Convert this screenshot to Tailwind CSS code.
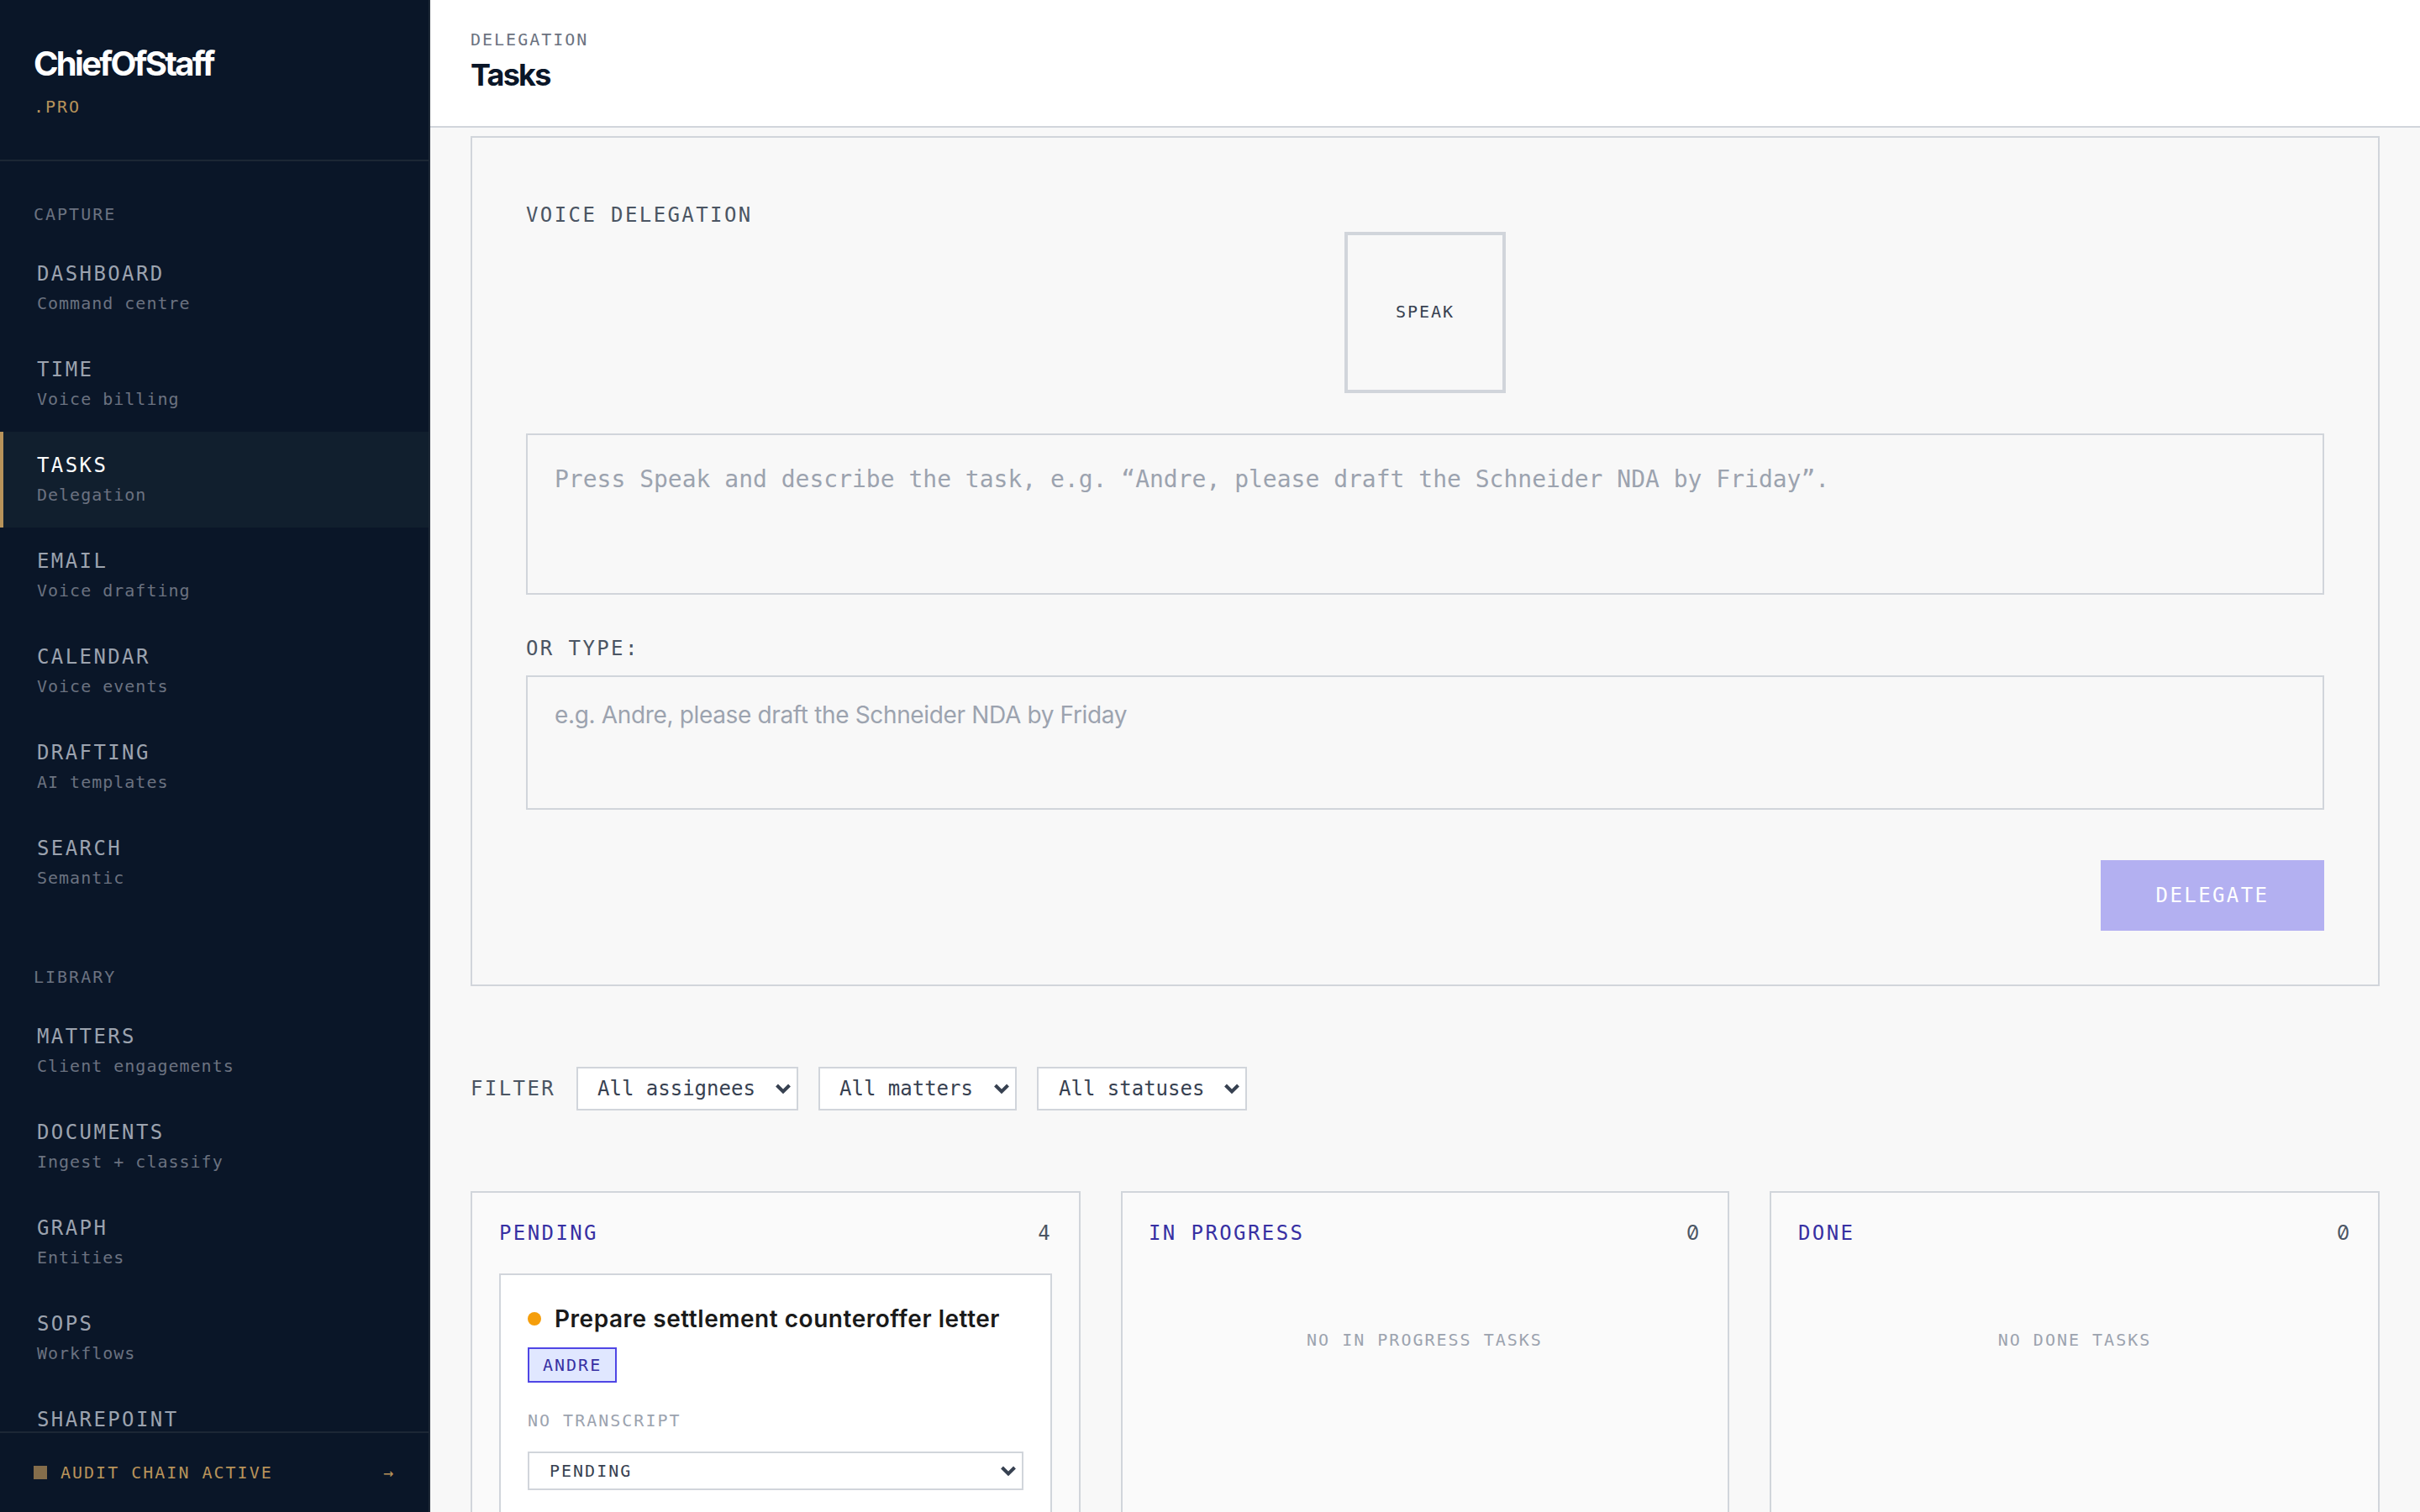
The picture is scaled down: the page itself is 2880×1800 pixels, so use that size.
<!DOCTYPE html>
<html lang="en">

<head>
    <meta charset="UTF-8">
    <title>Tasks | ChiefOfStaff.pro</title>
    <script src="https://cdn.jsdelivr.net/npm/@tailwindcss/browser@4"></script>
</head>

<body class="flex h-screen overflow-hidden bg-[#f8f8f8] font-['DejaVu_Sans_Mono',monospace]">
    <!-- Sidebar -->
    <aside class="flex h-full w-[512px] shrink-0 flex-col border-r-2 border-[#1f2937] bg-[#0a1628]">
        <div class="h-48 shrink-0 border-b-2 border-[#1c2735] px-10 pt-12">
            <div class="font-['Inter',sans-serif] text-[40px] leading-[56px] font-bold tracking-[-0.068em] text-white">ChiefOfStaff</div>
            <div class="mt-2 text-[20px] leading-[30px] tracking-[0.1em] text-[#b8935a]">.PRO</div>
        </div>
        <nav class="min-h-0 flex-1 overflow-hidden pt-12">
            <div class="mb-16">
                <div class="mb-4 px-10 text-[20px] leading-[30px] tracking-[0.1em] text-[#6b7280]">CAPTURE</div>
                <a class="block h-[114px] border-l-4 border-transparent pt-[22px] pl-10">
                    <div class="text-2xl leading-9 tracking-[0.1em] text-[#9ca3af]">DASHBOARD</div>
                    <div class="mt-0.5 text-[20px] leading-[30px] tracking-[0.05em] text-[#6b7280]">Command centre</div>
                </a>
                <a class="block h-[114px] border-l-4 border-transparent pt-[22px] pl-10">
                    <div class="text-2xl leading-9 tracking-[0.1em] text-[#9ca3af]">TIME</div>
                    <div class="mt-0.5 text-[20px] leading-[30px] tracking-[0.05em] text-[#6b7280]">Voice billing</div>
                </a>
                <a class="block h-[114px] border-l-4 border-[#b8935a] bg-[#111f2e] pt-[22px] pl-10">
                    <div class="text-2xl leading-9 tracking-[0.1em] text-white">TASKS</div>
                    <div class="mt-0.5 text-[20px] leading-[30px] tracking-[0.05em] text-[#6b7280]">Delegation</div>
                </a>
                <a class="block h-[114px] border-l-4 border-transparent pt-[22px] pl-10">
                    <div class="text-2xl leading-9 tracking-[0.1em] text-[#9ca3af]">EMAIL</div>
                    <div class="mt-0.5 text-[20px] leading-[30px] tracking-[0.05em] text-[#6b7280]">Voice drafting</div>
                </a>
                <a class="block h-[114px] border-l-4 border-transparent pt-[22px] pl-10">
                    <div class="text-2xl leading-9 tracking-[0.1em] text-[#9ca3af]">CALENDAR</div>
                    <div class="mt-0.5 text-[20px] leading-[30px] tracking-[0.05em] text-[#6b7280]">Voice events</div>
                </a>
                <a class="block h-[114px] border-l-4 border-transparent pt-[22px] pl-10">
                    <div class="text-2xl leading-9 tracking-[0.1em] text-[#9ca3af]">DRAFTING</div>
                    <div class="mt-0.5 text-[20px] leading-[30px] tracking-[0.05em] text-[#6b7280]">AI templates</div>
                </a>
                <a class="block h-[114px] border-l-4 border-transparent pt-[22px] pl-10">
                    <div class="text-2xl leading-9 tracking-[0.1em] text-[#9ca3af]">SEARCH</div>
                    <div class="mt-0.5 text-[20px] leading-[30px] tracking-[0.05em] text-[#6b7280]">Semantic</div>
                </a>
            </div>
            <div>
                <div class="mb-4 px-10 text-[20px] leading-[30px] tracking-[0.1em] text-[#6b7280]">LIBRARY</div>
                <a class="block h-[114px] border-l-4 border-transparent pt-[22px] pl-10">
                    <div class="text-2xl leading-9 tracking-[0.1em] text-[#9ca3af]">MATTERS</div>
                    <div class="mt-0.5 text-[20px] leading-[30px] tracking-[0.05em] text-[#6b7280]">Client engagements</div>
                </a>
                <a class="block h-[114px] border-l-4 border-transparent pt-[22px] pl-10">
                    <div class="text-2xl leading-9 tracking-[0.1em] text-[#9ca3af]">DOCUMENTS</div>
                    <div class="mt-0.5 text-[20px] leading-[30px] tracking-[0.05em] text-[#6b7280]">Ingest + classify</div>
                </a>
                <a class="block h-[114px] border-l-4 border-transparent pt-[22px] pl-10">
                    <div class="text-2xl leading-9 tracking-[0.1em] text-[#9ca3af]">GRAPH</div>
                    <div class="mt-0.5 text-[20px] leading-[30px] tracking-[0.05em] text-[#6b7280]">Entities</div>
                </a>
                <a class="block h-[114px] border-l-4 border-transparent pt-[22px] pl-10">
                    <div class="text-2xl leading-9 tracking-[0.1em] text-[#9ca3af]">SOPS</div>
                    <div class="mt-0.5 text-[20px] leading-[30px] tracking-[0.05em] text-[#6b7280]">Workflows</div>
                </a>
                <a class="block border-l-4 border-transparent pt-[22px] pl-10">
                    <div class="text-2xl leading-9 tracking-[0.1em] text-[#9ca3af]">SHAREPOINT</div>
                </a>
            </div>
        </nav>
        <div class="flex h-24 shrink-0 items-center border-t-2 border-[#1c2735] px-10 text-[20px] leading-[30px] tracking-[0.1em] text-[#b8935a]">
            <span class="mr-4 size-4 bg-[#b8935a] opacity-70"></span>
            <span>AUDIT CHAIN ACTIVE</span>
            <span class="ml-auto">→</span>
        </div>
    </aside>

    <div class="flex min-w-0 flex-1 flex-col">
        <header class="h-[152px] shrink-0 border-b-2 border-[#d1d5db] bg-white px-12 pt-8">
            <div class="text-[20px] leading-[30px] tracking-[0.1em] text-[#6b7280]">DELEGATION</div>
            <h1 class="font-['Inter',sans-serif] text-4xl leading-[54px] font-bold tracking-[-0.05em] text-[#0a1628]">Tasks</h1>
        </header>

        <main class="min-h-0 flex-1 overflow-hidden px-12 pt-2.5">
            <!-- Voice delegation -->
            <section class="h-[1012px] border-2 border-[#d1d5db] px-16 pt-[74px]">
                <div class="text-2xl leading-9 tracking-[0.1em] text-[#4b5563]">VOICE DELEGATION</div>
                <button class="mx-auto mt-0.5 flex size-48 items-center justify-center border-4 border-[#d1d5db] pb-0.5 text-[20px] tracking-[0.1em] text-[#374151]">SPEAK</button>
                <div class="mt-12 h-48 border-2 border-[#d1d5db] px-8 pt-8 text-[28px] leading-[42px] text-[#9ca3af]">Press Speak and describe the task, e.g. “Andre, please draft the Schneider NDA by Friday”.</div>
                <div class="mt-[46px] text-2xl leading-9 tracking-[0.1em] text-[#4b5563]">OR TYPE:</div>
                <div class="mt-[14px] h-40 border-2 border-[#d1d5db] px-8 pt-6 font-['Inter',sans-serif] text-[28px] leading-[42px] tracking-[-0.35px] text-[#9ca3af]">e.g. Andre, please draft the Schneider NDA by Friday</div>
                <div class="mt-[60px] flex justify-end">
                    <button class="h-[84px] w-[266px] bg-[#b3b0f1] text-2xl tracking-[0.1em] text-white">DELEGATE</button>
                </div>
            </section>

            <!-- Filters -->
            <div class="mt-24 flex h-[52px] items-center">
                <span class="mr-6 w-[102px] text-2xl tracking-[0.1em] text-[#4b5563]">FILTER</span>
                <div class="mr-6 flex h-full w-[264px] items-center justify-between border-2 border-[#d1d5db] bg-white pr-1.5 pl-[23px] text-2xl text-[#374151]">
                    All assignees
                    <svg class="size-5 shrink-0" viewBox="0 0 20 20" fill="none" stroke="currentColor" stroke-width="4"><path d="M2.5 6l7.5 7.5L17.5 6" /></svg>
                </div>
                <div class="mr-6 flex h-full w-[236px] items-center justify-between border-2 border-[#d1d5db] bg-white pr-1.5 pl-[23px] text-2xl text-[#374151]">
                    All matters
                    <svg class="size-5 shrink-0" viewBox="0 0 20 20" fill="none" stroke="currentColor" stroke-width="4"><path d="M2.5 6l7.5 7.5L17.5 6" /></svg>
                </div>
                <div class="flex h-full w-[250px] items-center justify-between border-2 border-[#d1d5db] bg-white pr-1.5 pl-6 text-2xl text-[#374151]">
                    All statuses
                    <svg class="size-5 shrink-0" viewBox="0 0 20 20" fill="none" stroke="currentColor" stroke-width="4"><path d="M2.5 6l7.5 7.5L17.5 6" /></svg>
                </div>
            </div>

            <!-- Board -->
            <div class="mt-24 grid h-[700px] grid-cols-[726px_724px_726px] gap-12">
                <div class="border-2 border-[#d1d5db] bg-[#fafafa] px-8 pt-[30px]">
                    <div class="flex justify-between text-2xl leading-9 tracking-[0.1em]">
                        <span class="text-[#3730a3]">PENDING</span>
                        <span class="text-[#4b5563]">4</span>
                    </div>
                    <div class="mt-[30px] h-[600px] border-2 border-[#d1d5db] bg-white px-8 pt-8">
                        <div class="flex items-center">
                            <span class="mr-4 size-4 rounded-full bg-[#f59e0b]"></span>
                            <span class="font-['Inter',sans-serif] text-[28px] leading-10 font-semibold tracking-[0.53px] text-[#1a1a1a]">Prepare settlement counteroffer letter</span>
                        </div>
                        <div class="mt-[14px] flex h-[42px] w-[106px] items-center border-2 border-[#4f46e5] bg-[#e0e7ff] px-4 text-[20px] tracking-[0.1em] text-[#3730a3]">ANDRE</div>
                        <div class="mt-[30px] text-[20px] leading-[30px] tracking-[0.1em] text-[#9ca3af]">NO TRANSCRIPT</div>
                        <div class="mt-[22px] flex h-[46px] items-center justify-between border-2 border-[#d1d5db] bg-white pr-1.5 pl-6 text-[20px] tracking-[0.1em] text-[#374151]">
                            PENDING
                            <svg class="size-5 shrink-0" viewBox="0 0 20 20" fill="none" stroke="currentColor" stroke-width="4"><path d="M2.5 6l7.5 7.5L17.5 6" /></svg>
                        </div>
                    </div>
                </div>
                <div class="border-2 border-[#d1d5db] bg-[#fafafa] pr-8 pl-[31px] pt-[30px]">
                    <div class="flex justify-between text-2xl leading-9 tracking-[0.1em]">
                        <span class="text-[#3730a3]">IN PROGRESS</span>
                        <span class="w-[17px] font-['Inter',sans-serif] tracking-normal text-[#4b5563] slashed-zero">0</span>
                    </div>
                    <div class="mt-[94px] text-center text-[20px] leading-[30px] tracking-[0.1em] text-[#9ca3af]">NO IN PROGRESS TASKS</div>
                </div>
                <div class="border-2 border-[#d1d5db] bg-[#fafafa] px-8 pt-[30px]">
                    <div class="flex justify-between text-2xl leading-9 tracking-[0.1em]">
                        <span class="text-[#3730a3]">DONE</span>
                        <span class="w-[17px] font-['Inter',sans-serif] tracking-normal text-[#4b5563] slashed-zero">0</span>
                    </div>
                    <div class="mt-[94px] text-center text-[20px] leading-[30px] tracking-[0.1em] text-[#9ca3af]">NO DONE TASKS</div>
                </div>
            </div>
        </main>
    </div>
</body>

</html>
